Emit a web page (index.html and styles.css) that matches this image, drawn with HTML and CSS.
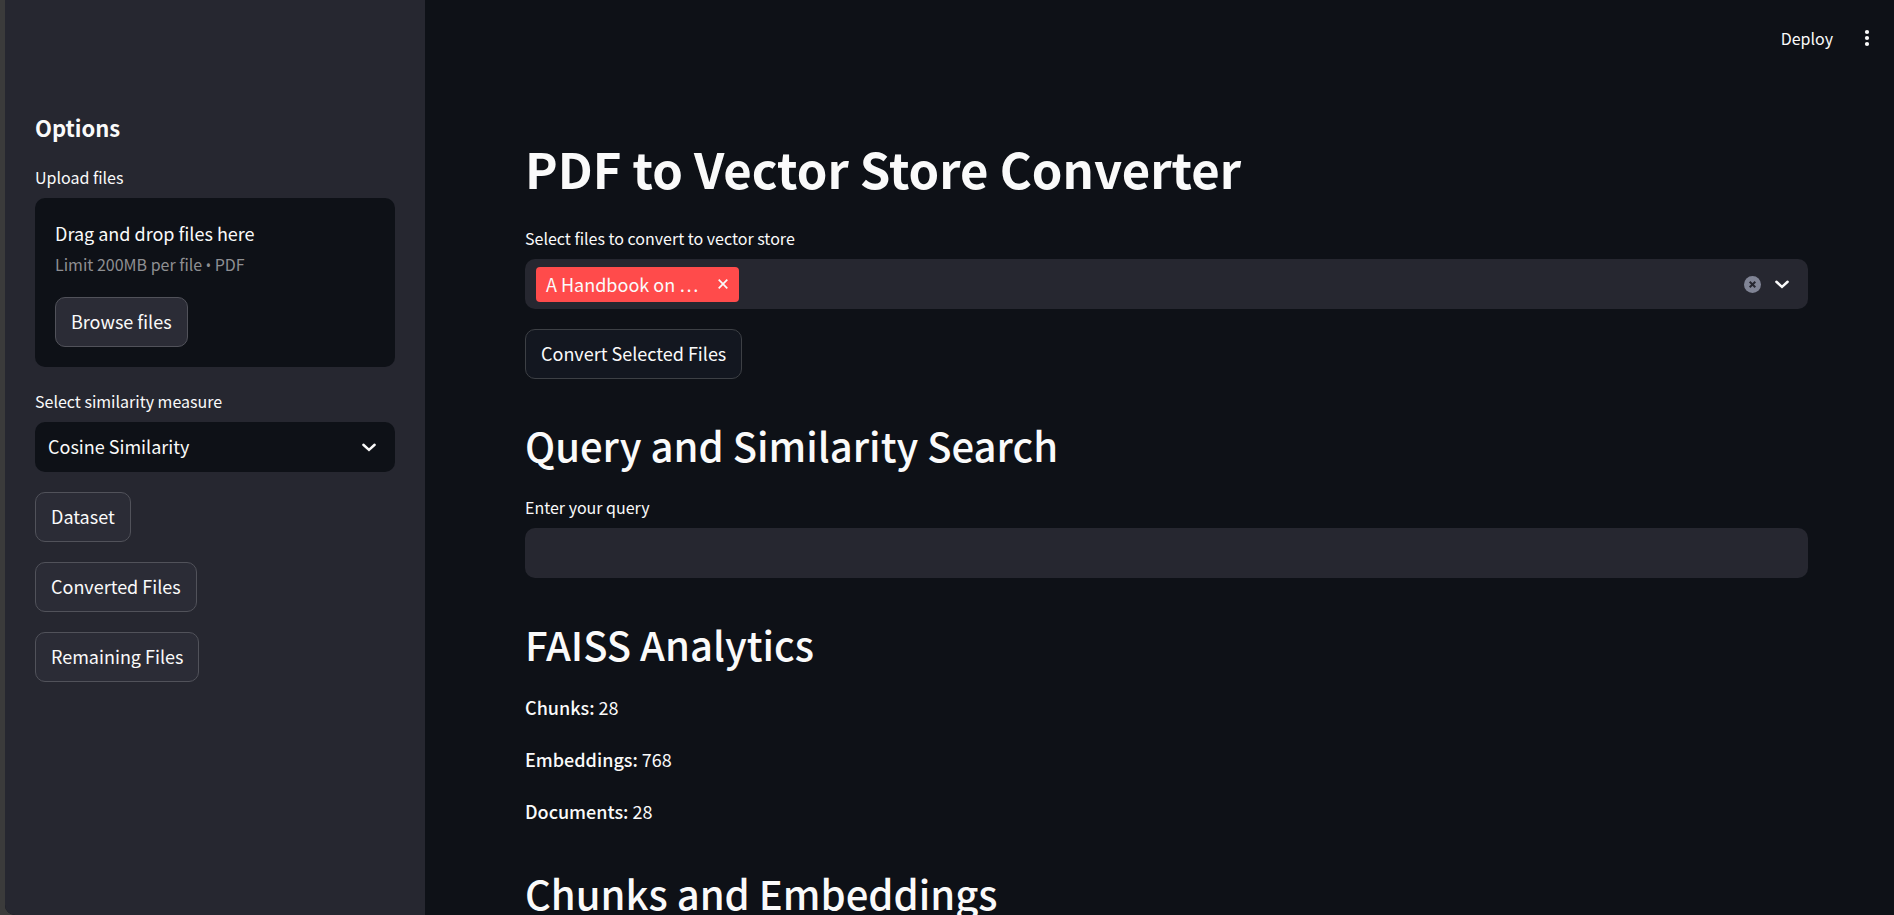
FILE: index.html
```html
<!DOCTYPE html>
<html lang="en">
<head>
<meta charset="utf-8">
<meta name="viewport" content="width=device-width, initial-scale=1">
<title>PDF to Vector Store Converter</title>
<link rel="stylesheet" href="styles.css">
</head>
<body>
<div class="app">
  <aside class="sidebar">
    <h2 class="sidebar-title">Options</h2>
    <div class="field">
      <label class="label" for="browse">Upload files</label>
      <div class="dropzone">
        <div class="drop-text">Drag and drop files here</div>
        <div class="drop-limit">Limit 200MB per file <span class="bullet">•</span> PDF</div>
        <button class="btn" id="browse" type="button">Browse files</button>
      </div>
    </div>
    <div class="field">
      <label class="label" for="measure">Select similarity measure</label>
      <div class="select-wrap">
        <select class="select" id="measure"><option>Cosine Similarity</option></select>
        <svg class="chevron" viewBox="0 0 8 8" aria-hidden="true"><path d="M1.5 3 4 5.25 6.5 3"/></svg>
      </div>
    </div>
    <div class="stack">
      <button class="btn" type="button">Dataset</button>
      <button class="btn" type="button">Converted Files</button>
      <button class="btn" type="button">Remaining Files</button>
    </div>
  </aside>
  <div class="page">
    <header class="toolbar">
      <button class="tool" type="button">Deploy</button>
      <button class="tool" type="button" aria-label="Main menu">
        <svg class="dots" viewBox="0 0 20 20" aria-hidden="true"><circle cx="10" cy="4" r="2.1"/><circle cx="10" cy="10" r="2.1"/><circle cx="10" cy="16" r="2.1"/></svg>
      </button>
    </header>
    <main class="content">
      <h1 class="title">PDF to Vector Store Converter</h1>
      <label class="label" for="files">Select files to convert to vector store</label>
      <div class="multi">
        <span class="tag"><span class="tag-text">A Handbook on …</span>
          <button class="icon-btn" type="button" aria-label="Remove file"><svg class="tag-x" viewBox="0 0 10 10" aria-hidden="true"><path d="M.7.7 9.3 9.3M9.3.7.7 9.3"/></svg></button>
        </span>
        <input class="multi-input" id="files" type="text">
        <button class="icon-btn" type="button" aria-label="Clear all"><svg class="clear" viewBox="0 0 17 17" aria-hidden="true"><circle cx="8.5" cy="8.5" r="8.5"/><path d="m5.7 5.7 5.6 5.6m0-5.6-5.6 5.6"/></svg></button>
        <button class="icon-btn" type="button" aria-label="Open list"><svg class="chevron" viewBox="0 0 8 8" aria-hidden="true"><path d="M1.5 3 4 5.25 6.5 3"/></svg></button>
      </div>
      <button class="btn btn-main" type="button">Convert Selected Files</button>
      <h2 class="heading">Query and Similarity Search</h2>
      <label class="label" for="query">Enter your query</label>
      <input class="text-input" id="query" type="text">
      <h2 class="heading">FAISS Analytics</h2>
      <div class="stack">
        <p class="stat"><strong>Chunks:</strong> 28</p>
        <p class="stat"><strong>Embeddings:</strong> 768</p>
        <p class="stat"><strong>Documents:</strong> 28</p>
      </div>
      <h2 class="heading">Chunks and Embeddings</h2>
    </main>
  </div>
</div>
</body>
</html>
```
FILE: styles.css
```css
* { box-sizing: border-box; }

body {
  margin: 0;
  background: #3b3b3b;
  color: #fafafa;
  font-family: "Noto Sans CJK SC", "Noto Sans", sans-serif;
  font-size: 18px;
  line-height: 32px;
}

button, input, select {
  font: inherit;
  color: inherit;
}

h1, h2, p { margin: 0; }

.app {
  display: flex;
  height: 100vh;
  margin-left: 5px;
  overflow: hidden;
  background: #0e1117;
  border-bottom-left-radius: 10px;
}

.sidebar {
  flex: none;
  width: 420px;
  padding: 112px 30px 30px;
  background: #262730;
}

.sidebar-title {
  font-size: 22px;
  font-weight: 600;
  line-height: 30px;
}

.field {
  margin: 23px 0 20px;
}

.field + .field { margin-top: 22px; }

.label {
  display: block;
  margin-bottom: 9px;
  font-size: 16px;
  line-height: 24px;
}

.dropzone {
  padding: 20px;
  border-radius: 10px;
  background: #0e1117;
}

.drop-text { line-height: 30px; }

.drop-limit {
  margin: 4px 0 20px;
  color: #8e8f92;
  font-size: 16px;
  line-height: 25px;
}

.bullet {
  font-family: "Noto Sans", sans-serif;
  font-size: 14px;
  line-height: 1;
}

.btn {
  height: 50px;
  padding: 0 15px 2px;
  border: 1px solid #51525a;
  border-radius: 10px;
  background: #2b2c36;
  line-height: 30px;
}

.btn-main {
  align-self: flex-start;
  margin-top: 20px;
  border-color: #3d4045;
  background: #131720;
}

.select-wrap {
  display: grid;
  align-items: center;
}

.select-wrap > * { grid-area: 1 / 1; }

.select {
  height: 50px;
  padding: 0 50px 2px 13px;
  border: 0;
  border-radius: 10px;
  background: #0e1117;
  appearance: none;
}

.select-wrap .chevron {
  justify-self: end;
  margin-right: 17px;
  pointer-events: none;
}

.chevron {
  display: block;
  width: 18px;
  height: 18px;
  fill: none;
  stroke: #fafafa;
  stroke-width: 1.1;
  stroke-linecap: round;
}

.stack {
  display: flex;
  flex-direction: column;
  align-items: flex-start;
  gap: 20px;
}

.page {
  flex: 1;
  min-width: 0;
}

.toolbar {
  display: flex;
  justify-content: flex-end;
  align-items: center;
  gap: 24px;
  height: 76px;
  padding-right: 17px;
}

.tool {
  padding: 0;
  border: 0;
  background: none;
  font-size: 16px;
  line-height: 24px;
}

.dots {
  display: block;
  width: 20px;
  height: 20px;
  fill: #fafafa;
}

.content {
  display: flex;
  flex-direction: column;
  padding: 62px 86px 0 100px;
}

.title {
  margin-bottom: 28px;
  font-size: 49px;
  font-weight: 700;
  line-height: 60px;
}

.heading {
  margin: 41px 0 22px;
  font-size: 40px;
  font-weight: 500;
  line-height: 50px;
}

.heading + .label { margin-top: 3px; }

.multi {
  display: flex;
  align-items: center;
  gap: 12px;
  height: 50px;
  padding: 0 17px 0 11px;
  border-radius: 10px;
  background: #262730;
}

.tag {
  display: flex;
  align-items: center;
  gap: 20px;
  height: 35px;
  padding: 0 11px 0 10px;
  border-radius: 4px;
  background: #ff4b4b;
}

.icon-btn {
  padding: 0;
  border: 0;
  background: none;
}

.tag-x {
  display: block;
  width: 10px;
  height: 10px;
  fill: none;
  stroke: #fafafa;
  stroke-width: 1.7;
}

.multi-input {
  flex: 1;
  min-width: 0;
  border: 0;
  background: none;
}

.clear {
  display: block;
  width: 17px;
  height: 17px;
  fill: #808495;
  stroke: #262730;
}

.clear circle { stroke: none; }
.clear path { stroke-width: 2; }

.text-input {
  height: 50px;
  padding: 0 14px;
  border: 0;
  border-radius: 10px;
  background: #262730;
}

.stat strong { font-weight: 500; }
```
